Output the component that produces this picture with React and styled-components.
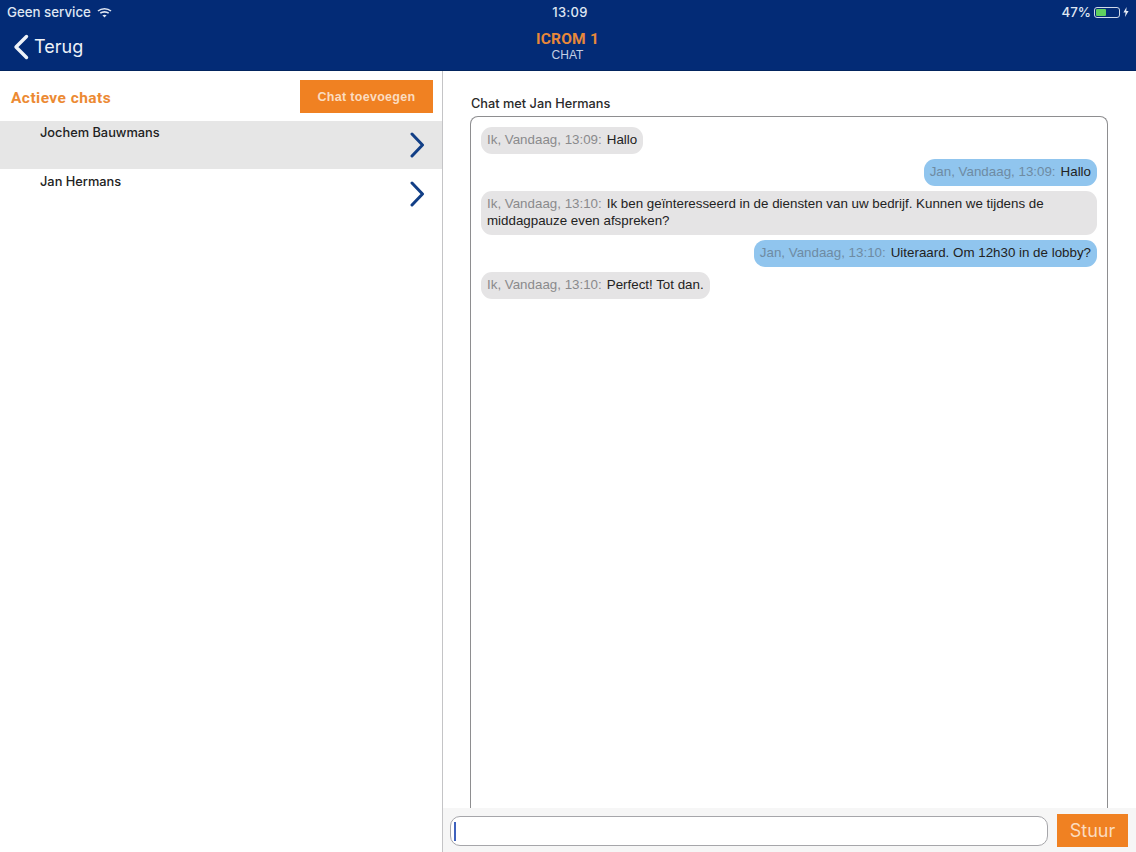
import React from "react";
import styled, { createGlobalStyle } from "styled-components";

const Global = createGlobalStyle`
  html, body { margin: 0; padding: 0; background: #fff; }
  body { font-family: "Liberation Sans", Arial, sans-serif; }
`;

const Page = styled.div`
  width: 1136px;
  height: 852px;
  display: flex;
  flex-direction: column;
  overflow: hidden;
  background: #fff;
`;

const Header = styled.header`
  height: 71px;
  flex: none;
  box-sizing: border-box;
  background: #032b76;
  border-bottom: 1px solid #02245f;
  color: #fff;
  display: flex;
  flex-direction: column;
`;

const StatusBar = styled.div`
  height: 24px;
  display: grid;
  grid-template-columns: 1fr auto 1fr;
  align-items: center;
  padding: 0 7px 0 7px;
  font: 500 13.3px/24px Inter, sans-serif;
  color: #dfe6f2;
`;

const StatusLeft = styled.div`
  display: flex;
  align-items: center;
  gap: 6px;
`;

const StatusRight = styled.div`
  display: flex;
  align-items: center;
  justify-content: flex-end;
  gap: 3px;
`;

const Clock = styled.div`
  font-size: 13px;
  letter-spacing: 0.3px;
  margin-left: 4px;
`;

const NavBar = styled.div`
  flex: 1;
  display: grid;
  grid-template-columns: 1fr auto 1fr;
  align-items: start;
  padding-left: 13px;
`;

const BackLink = styled.div`
  display: flex;
  align-items: center;
  gap: 5px;
  margin-top: 10px;
  font: 400 18px/26px Inter, sans-serif;
  color: #eef2f8;
`;

const TitleBlock = styled.div`
  text-align: center;
  margin-left: -14px;
`;

const Title = styled.div`
  font: 700 15.5px/16px Roboto, sans-serif;
  letter-spacing: 0.2px;
  color: #e8883a;
  margin-top: 7px;
`;

const Subtitle = styled.div`
  font: 400 12px/14px "Liberation Sans", sans-serif;
  color: #c3cfe3;
  margin-top: 1px;
`;

const Body = styled.div`
  flex: 1;
  min-height: 0;
  display: flex;
`;

const Sidebar = styled.aside`
  width: 443px;
  flex: none;
  box-sizing: border-box;
  border-right: 1px solid #c4c4c6;
`;

const SidebarTop = styled.div`
  height: 50px;
  box-sizing: border-box;
  display: flex;
  align-items: flex-start;
  justify-content: space-between;
  padding: 9px 9px 0 11px;
`;

const SidebarTitle = styled.h2`
  margin: 9px 0 0;
  font: 700 15.5px/18px Roboto, sans-serif;
  letter-spacing: 0.45px;
  color: #ec8a33;
`;

const AddButton = styled.div`
  width: 133px;
  height: 33px;
  background: #f08122;
  color: #fbdcc0;
  font: 700 12.5px/34px "Liberation Sans", sans-serif;
  letter-spacing: 0.3px;
  text-align: center;
`;

const ChatRow = styled.div`
  height: 48px;
  margin-bottom: 1px;
  box-sizing: border-box;
  position: relative;
  padding: 5px 0 0 40px;
  background: ${(p) => (p.$active ? "#e6e6e6" : "#fff")};
  font: 500 12.8px/14px Inter, sans-serif;
  color: #222;
`;

const RowArrow = styled.svg`
  position: absolute;
  right: 17px;
  top: 11px;
`;

const ChatPane = styled.main`
  flex: 1;
  min-width: 0;
  display: flex;
  flex-direction: column;
`;

const ChatArea = styled.div`
  flex: 1;
  min-height: 0;
  display: flex;
  flex-direction: column;
  padding: 26px 28px 0 27px;
`;

const ChatLabel = styled.div`
  font: 500 12.75px/14px Inter, sans-serif;
  color: #2a2a2a;
  margin-bottom: 5px;
  padding-left: 1px;
`;

const Transcript = styled.div`
  flex: 1;
  box-sizing: border-box;
  border: 1px solid #8e8e90;
  border-bottom: none;
  border-radius: 8px 8px 0 0;
  padding: 10px 10px;
  display: flex;
  flex-direction: column;
  gap: 5px;
`;

const Bubble = styled.div`
  align-self: ${(p) => (p.$mine ? "flex-start" : "flex-end")};
  box-sizing: border-box;
  padding: 4px 6px 6px;
  min-height: 27px;
  border-radius: 11px;
  background: ${(p) => (p.$mine ? "#e5e4e5" : "#90c5ee")};
  font: 400 13.35px/17px "Liberation Sans", sans-serif;
  color: #222;
`;

const Meta = styled.span`
  color: ${(p) => (p.$mine ? "#8a8a8c" : "#6e8ba3")};
  margin-right: 5px;
`;

const Composer = styled.div`
  height: 44px;
  flex: none;
  background: #f6f6f6;
  display: flex;
  align-items: flex-start;
  padding: 0 8px 0 7px;
  gap: 9px;
`;

const InputField = styled.div`
  flex: 1;
  height: 30px;
  margin-top: 8px;
  box-sizing: border-box;
  background: #fff;
  border: 1px solid #a6a6aa;
  border-radius: 10px;
  padding: 5px 0 0 3px;
`;

const Caret = styled.div`
  width: 2px;
  height: 19px;
  background: #3f62bd;
`;

const SendButton = styled.div`
  width: 71px;
  height: 33px;
  margin-top: 6px;
  background: #f08122;
  color: #fbdcc0;
  font: 400 18px/34px Inter, sans-serif;
  text-align: center;
`;

const BatteryShell = styled.div`
  width: 26px;
  height: 11px;
  box-sizing: border-box;
  border: 1px solid #cfd8e8;
  border-radius: 3px;
  padding: 1px;
`;

const BatteryFill = styled.div`
  height: 100%;
  border-radius: 1px;
  background: #5fd05f;
`;

const Wifi = () => (
  <svg width="15" height="11" viewBox="0 0 15 11" fill="none" stroke="#dfe6f2" strokeWidth="1.6">
    <path d="M1 4 C4.6 .9 10.4 .9 14 4" />
    <path d="M3.3 6.2 C5.6 4.4 9.4 4.4 11.7 6.2" />
    <path d="M7.5 10.6 L5.4 8.3 C6.6 7.4 8.4 7.4 9.6 8.3 Z" fill="#dfe6f2" stroke="none" />
  </svg>
);

const BackChevron = () => (
  <svg width="16" height="26" viewBox="0 0 16 26" fill="none" stroke="#eef2f8" strokeWidth="3.4" strokeLinecap="round" strokeLinejoin="round">
    <path d="M13.5 2.5 L3 13 L13.5 23.5" />
  </svg>
);

const Bolt = () => (
  <svg width="6" height="10" viewBox="0 0 6 10" fill="#e8edf5">
    <path d="M3.6 0 L0.4 5.6 H2.6 L2 10 L5.6 4 H3.3 Z" />
  </svg>
);

const Arrow = () => (
  <RowArrow width="16" height="26" viewBox="0 0 16 26" fill="none" stroke="#123f86" strokeWidth="3" strokeLinecap="round" strokeLinejoin="round">
    <path d="M3 2 L13.5 13 L3 24" />
  </RowArrow>
);

const chats = [
  { name: "Jochem Bauwmans", active: true },
  { name: "Jan Hermans", active: false },
];

const messages = [
  { mine: true, meta: "Ik, Vandaag, 13:09:", text: "Hallo" },
  { mine: false, meta: "Jan, Vandaag, 13:09:", text: "Hallo" },
  {
    mine: true,
    meta: "Ik, Vandaag, 13:10:",
    text: "Ik ben geïnteresseerd in de diensten van uw bedrijf. Kunnen we tijdens de middagpauze even afspreken?",
  },
  { mine: false, meta: "Jan, Vandaag, 13:10:", text: "Uiteraard. Om 12h30 in de lobby?" },
  { mine: true, meta: "Ik, Vandaag, 13:10:", text: "Perfect! Tot dan." },
];

export default function App() {
  return (
    <Page>
      <Global />
      <Header>
        <StatusBar>
          <StatusLeft>
            Geen service <Wifi />
          </StatusLeft>
          <Clock>13:09</Clock>
          <StatusRight>
            47%
            <BatteryShell>
              <BatteryFill style={{ width: "47%" }} />
            </BatteryShell>
            <Bolt />
          </StatusRight>
        </StatusBar>
        <NavBar>
          <BackLink>
            <BackChevron />
            Terug
          </BackLink>
          <TitleBlock>
            <Title>ICROM 1</Title>
            <Subtitle>CHAT</Subtitle>
          </TitleBlock>
        </NavBar>
      </Header>
      <Body>
        <Sidebar>
          <SidebarTop>
            <SidebarTitle>Actieve chats</SidebarTitle>
            <AddButton>Chat toevoegen</AddButton>
          </SidebarTop>
          {chats.map((c) => (
            <ChatRow key={c.name} $active={c.active}>
              {c.name}
              <Arrow />
            </ChatRow>
          ))}
        </Sidebar>
        <ChatPane>
          <ChatArea>
            <ChatLabel>Chat met Jan Hermans</ChatLabel>
            <Transcript>
              {messages.map((m, i) => (
                <Bubble key={i} $mine={m.mine}>
                  <Meta $mine={m.mine}>{m.meta}</Meta>
                  {m.text}
                </Bubble>
              ))}
            </Transcript>
          </ChatArea>
          <Composer>
            <InputField>
              <Caret />
            </InputField>
            <SendButton>Stuur</SendButton>
          </Composer>
        </ChatPane>
      </Body>
    </Page>
  );
}
